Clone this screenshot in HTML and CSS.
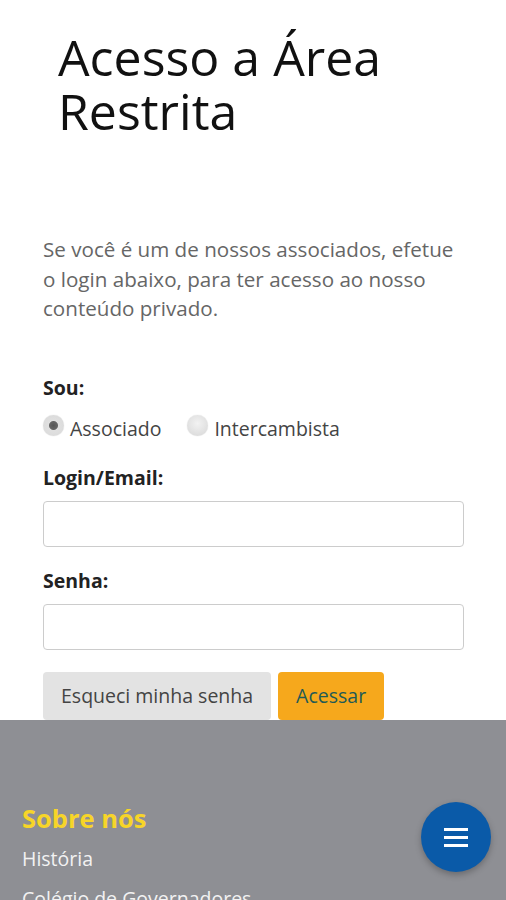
FILE: index.html
```html
<!DOCTYPE html>
<html lang="pt-BR">
<head>
    <meta charset="UTF-8">
    <meta name="viewport" content="width=device-width, initial-scale=1.0">
    <title>Acesso a Área Restrita</title>
    <link rel="stylesheet" href="styles.css">
</head>
<body>

    <header class="page-head">
        <h1>Acesso a Área Restrita</h1>
    </header>

    <main class="container">
        <p class="intro">Se você é um de nossos associados, efetue o login abaixo, para ter acesso ao nosso conteúdo privado.</p>

        <form class="login-form">
            <div class="field field-radios">
                <span class="label">Sou:</span>
                <div class="radios">
                    <label class="radio"><input type="radio" name="tipo" checked> Associado</label>
                    <label class="radio"><input type="radio" name="tipo"> Intercambista</label>
                </div>
            </div>

            <div class="field">
                <label class="label" for="login">Login/Email:</label>
                <input class="text-input" type="text" id="login">
            </div>

            <div class="field">
                <label class="label" for="senha">Senha:</label>
                <input class="text-input" type="password" id="senha">
            </div>

            <div class="actions">
                <button type="button" class="btn btn-light">Esqueci minha senha</button>
                <button type="submit" class="btn btn-primary">Acessar</button>
            </div>
        </form>
    </main>

    <footer class="site-footer">
        <h3>Sobre nós</h3>
        <ul>
            <li><a href="#">História</a></li>
            <li><a href="#">Colégio de Governadores</a></li>
        </ul>
    </footer>

    <button class="fab" aria-label="Menu">
        <svg width="24" height="22" viewBox="0 0 24 22">
            <rect x="0" y="2" width="24" height="3" fill="#fff"/>
            <rect x="0" y="10" width="24" height="3" fill="#fff"/>
            <rect x="0" y="18" width="24" height="3" fill="#fff"/>
        </svg>
    </button>

</body>
</html>
```

FILE: styles.css
```css
* {
    box-sizing: border-box;
    margin: 0;
    padding: 0;
}

body {
    font-family: 'Open Sans', sans-serif;
    background-color: #fff;
    color: #333;
}

.page-head {
    padding: 30px 20px 0 58px;
}

h1 {
    font-size: 50px;
    font-weight: 400;
    line-height: 54px;
    color: #111;
}

.container {
    padding: 97px 42px 0 43px;
}

.intro {
    font-size: 20.6px;
    line-height: 29.5px;
    color: #666;
    margin-bottom: 50px;
}

.field {
    margin-bottom: 20px;
}

.field-radios {
    margin-bottom: 22px;
}

.label {
    display: block;
    font-size: 19.5px;
    line-height: 27px;
    font-weight: 700;
    color: #222;
    margin-bottom: 10px;
}

.field-radios .label {
    margin-bottom: 14px;
}

.radios {
    display: flex;
    gap: 26px;
}

.radio {
    display: flex;
    align-items: center;
    gap: 6px;
    font-size: 19.5px;
    line-height: 27px;
    color: #444;
}

.radio input {
    appearance: none;
    width: 21px;
    height: 21px;
    border-radius: 50%;
    background: radial-gradient(circle at 50% 40%, #f2f2f2, #d6d6d6);
    box-shadow: 0 0 1px rgba(0, 0, 0, 0.2);
    position: relative;
    top: -3px;
}

.radio input:checked {
    background: radial-gradient(circle, #555 0, #666 4px, #e0e0e0 5px, #d8d8d8 100%);
}

.text-input {
    display: block;
    width: 100%;
    height: 46px;
    border: 1px solid #ccc;
    border-radius: 4px;
    font-size: 18px;
    padding: 0 12px;
}

.actions {
    display: flex;
    gap: 7px;
    margin-top: 22px;
}

.btn {
    font-family: 'Open Sans', sans-serif;
    font-size: 19.5px;
    height: 48px;
    border: none;
    border-radius: 4px;
    padding: 0 18px;
}

.btn-light {
    background-color: #e3e3e3;
    color: #444;
}

.btn-primary {
    background-color: #f6a81c;
    color: #1f5a55;
}

.site-footer {
    background-color: #8e8f94;
    padding: 82px 22px 0;
    height: 400px;
}

.site-footer h3 {
    font-size: 25.5px;
    font-weight: 700;
    color: #f7d528;
    line-height: 32px;
    margin-bottom: 5px;
}

.site-footer ul {
    list-style: none;
}

.site-footer li {
    font-size: 19.5px;
    line-height: 40px;
}

.site-footer a {
    color: #f2f2f2;
    text-decoration: none;
}

.fab {
    position: fixed;
    left: 421px;
    top: 802px;
    width: 70px;
    height: 70px;
    border-radius: 50%;
    border: none;
    background-color: #0a5aa8;
    box-shadow: 0 3px 6px rgba(0, 0, 0, 0.25);
    display: flex;
    align-items: center;
    justify-content: center;
}
```
